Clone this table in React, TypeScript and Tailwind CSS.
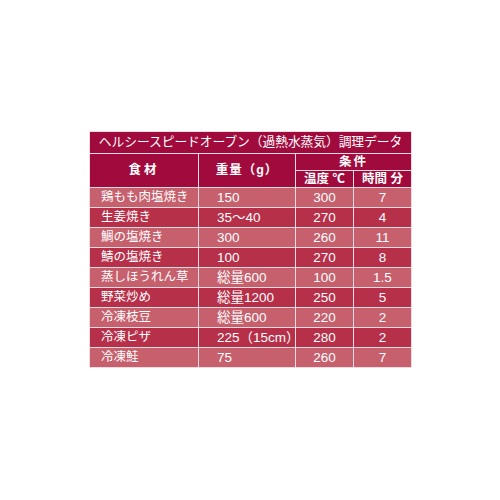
const rows = [
  { name: "鶏もも肉塩焼き", weight: "150", temp: "300", time: "7" },
  { name: "生姜焼き", weight: "35〜40", temp: "270", time: "4" },
  { name: "鯛の塩焼き", weight: "300", temp: "260", time: "11" },
  { name: "鯖の塩焼き", weight: "100", temp: "270", time: "8" },
  { name: "蒸しほうれん草", weight: "総量600", temp: "100", time: "1.5" },
  { name: "野菜炒め", weight: "総量1200", temp: "250", time: "5" },
  { name: "冷凍枝豆", weight: "総量600", temp: "220", time: "2" },
  { name: "冷凍ピザ", weight: "225（15cm）", temp: "280", time: "2" },
  { name: "冷凍鮭", weight: "75", temp: "260", time: "7" },
]

export default function App() {
  return (
    <div className="w-[500px] h-[500px] bg-white pt-[131px] pl-[89px] font-['Liberation_Sans','Noto_Sans_CJK_JP',sans-serif] text-white">
      <table className="w-[322px] table-fixed border-collapse">
        <colgroup>
          <col className="w-[109px]" />
          <col className="w-[97px]" />
          <col className="w-[58px]" />
          <col className="w-[58px]" />
        </colgroup>
        <thead>
          <tr className="h-[22px] bg-[#a10a3c]">
            <th colSpan={4} className="border border-[#f1dbe0] p-0 text-[12.8px] font-normal leading-none tracking-[-0.1px]">
              ヘルシースピードオーブン（過熱水蒸気）調理データ
            </th>
          </tr>
          <tr className="h-[17px] bg-[#a10a3c]">
            <th rowSpan={2} className="border border-[#f1dbe0] p-0 text-[12.5px] font-bold leading-none tracking-[3px]">
              食材
            </th>
            <th rowSpan={2} className="border border-[#f1dbe0] p-0 text-[12.5px] font-bold leading-none tracking-[1px]">
              重量（g）
            </th>
            <th colSpan={2} className="border border-[#f1dbe0] p-0 text-[12.5px] font-bold leading-none tracking-[2px]">
              条件
            </th>
          </tr>
          <tr className="h-[17px] bg-[#a10a3c]">
            <th className="border border-[#f1dbe0] p-0 text-[12.5px] font-bold leading-none">温度 ℃</th>
            <th className="border border-[#f1dbe0] p-0 text-[12.5px] font-bold leading-none">時間 分</th>
          </tr>
        </thead>
        <tbody>
          {rows.map((r, i) => (
            <tr key={r.name} className={i % 2 === 0 ? "h-[20px] bg-[#c6606d]" : "h-[20px] bg-[#b6304a]"}>
              <td className="border border-[#f1dbe0] py-0 pl-[11px] text-[12.5px] leading-none whitespace-nowrap">{r.name}</td>
              <td className="border border-[#f1dbe0] py-0 pl-[18px] text-[13.5px] leading-none whitespace-nowrap">{r.weight}</td>
              <td className="border border-[#f1dbe0] p-0 text-center text-[13.5px] leading-none">{r.temp}</td>
              <td className="border border-[#f1dbe0] p-0 text-center text-[13.5px] leading-none">{r.time}</td>
            </tr>
          ))}
        </tbody>
      </table>
    </div>
  )
}
